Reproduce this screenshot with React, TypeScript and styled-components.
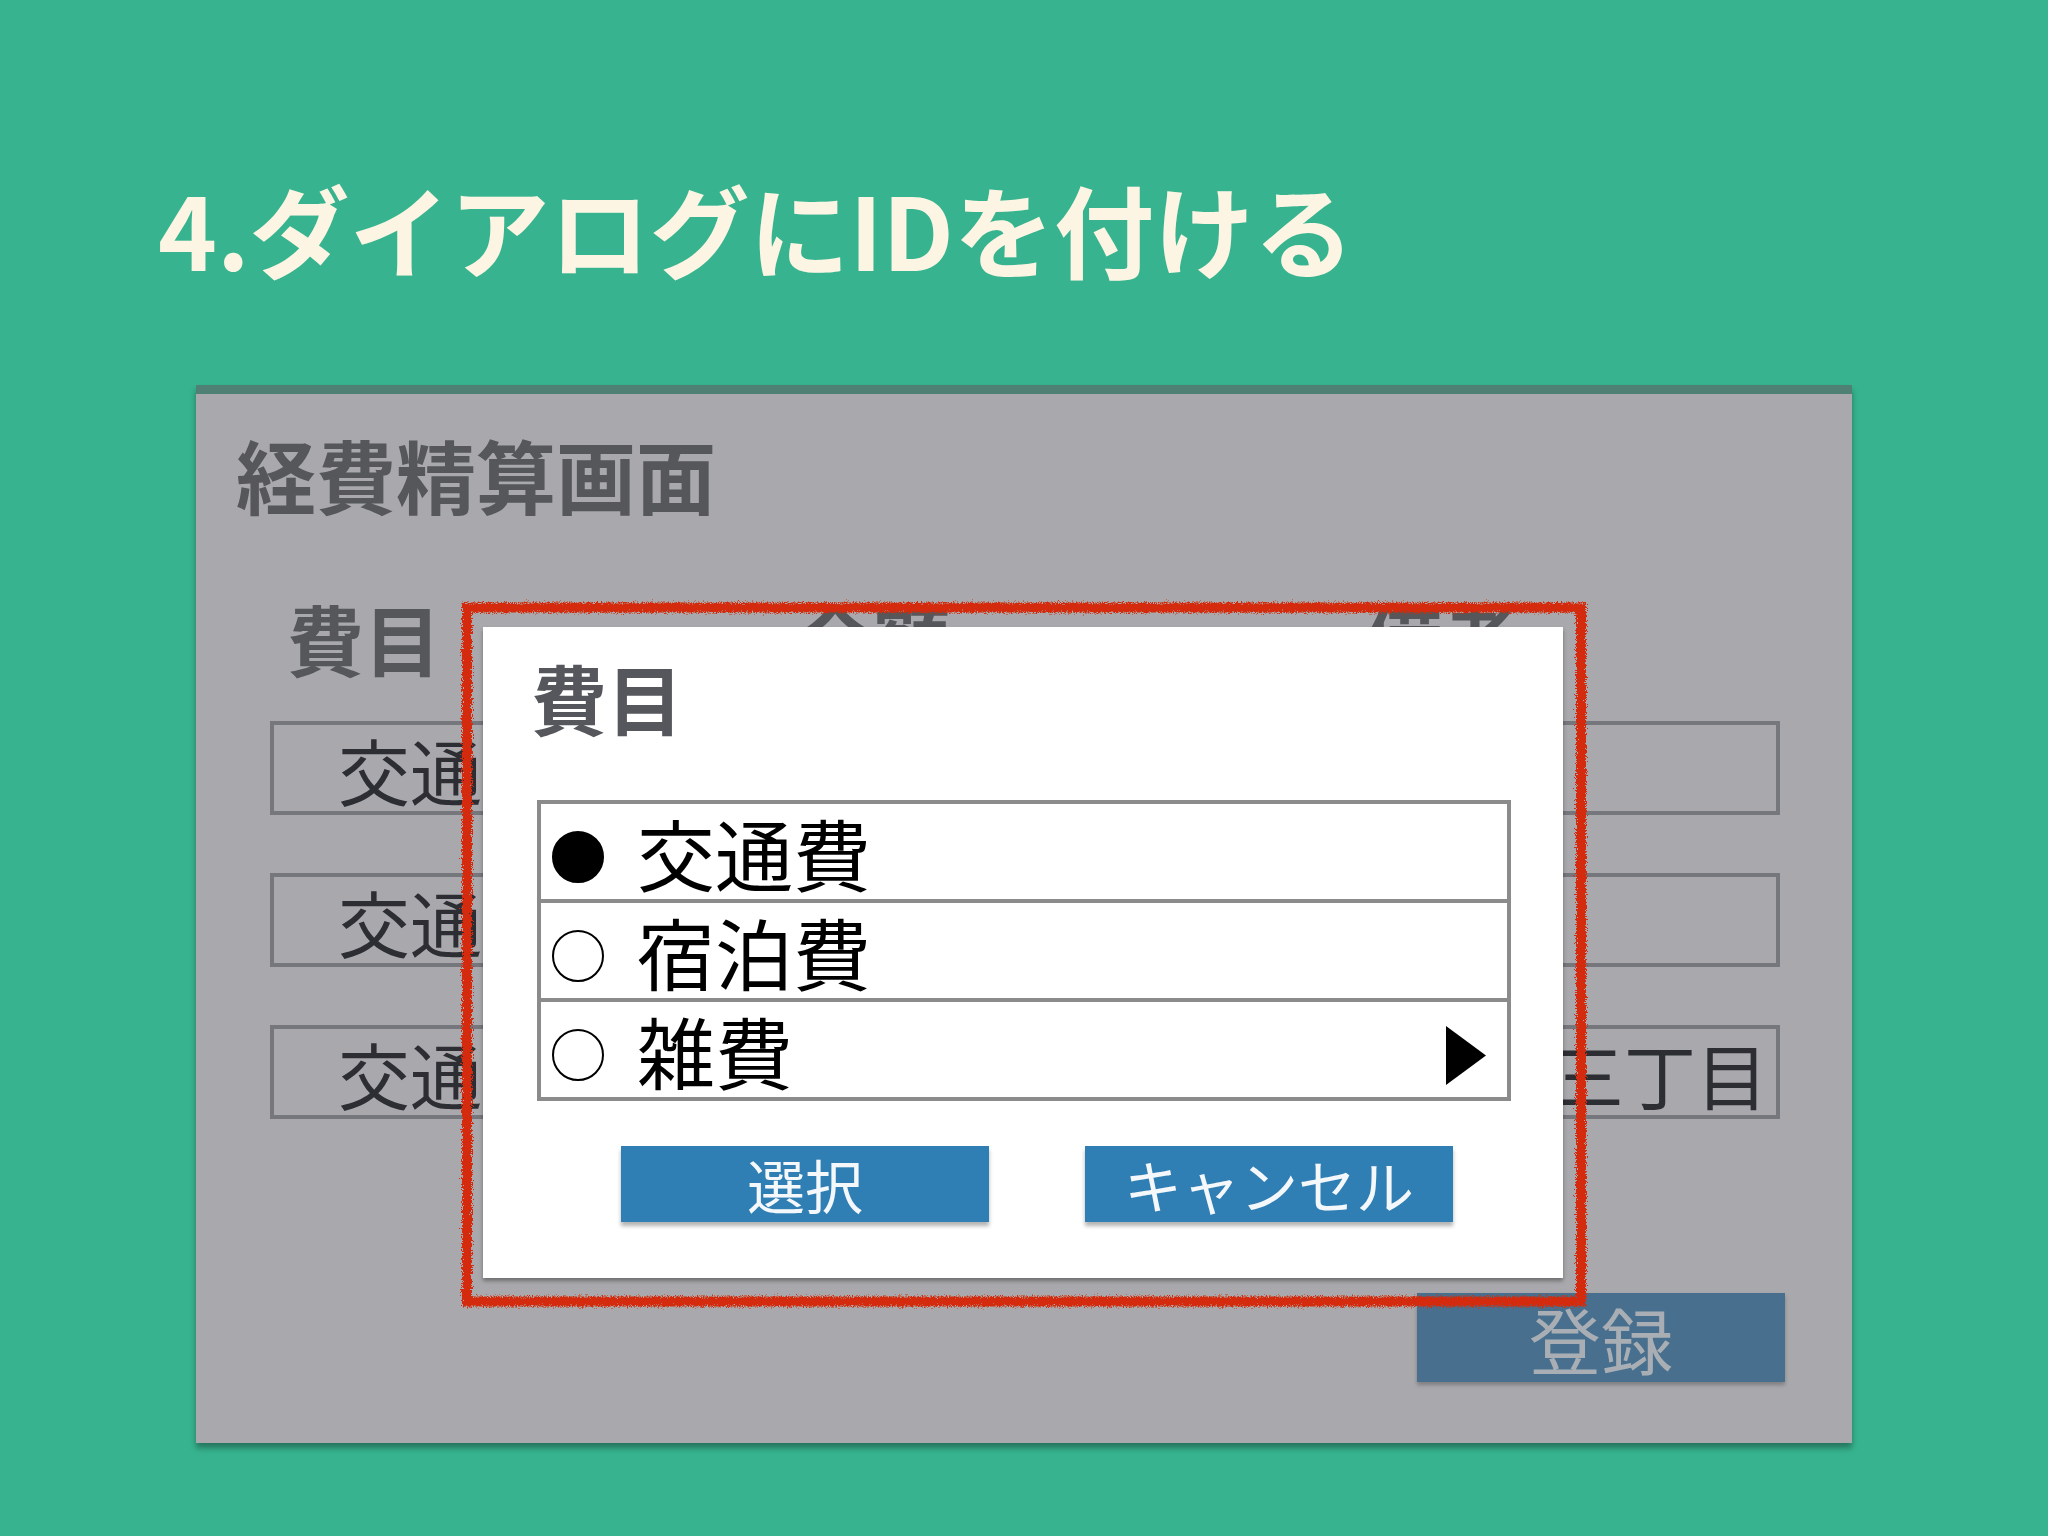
import styled, { createGlobalStyle } from "styled-components";

// ------------------ DATA ------------------
const rows = [
  { item: "交通費", amount: "", note: "" },
  { item: "交通費", amount: "", note: "" },
  { item: "交通費", amount: "", note: "港区芝公園三丁目" },
];

const options = [
  { label: "交通費", checked: true, more: false },
  { label: "宿泊費", checked: false, more: false },
  { label: "雑費", checked: false, more: true },
];

// ------------------ PAGE ------------------
export default function App() {
  return (
    <>
      <GlobalStyle />
      <Page>
        <Heading>4.ダイアログにIDを付ける</Heading>

        <Panel>
          <PanelTitle>経費精算画面</PanelTitle>

          <Table>
            <HeadCell $indent={17}>費目</HeadCell>
            <HeadCell $indent={117}>金額</HeadCell>
            <HeadCell $indent={285}>備考</HeadCell>

            {rows.map((r, i) => (
              <FieldRow key={i}>
                <InputBox>{r.item}</InputBox>
                <InputBox>{r.amount}</InputBox>
                <InputBox $right>{r.note}</InputBox>
              </FieldRow>
            ))}
          </Table>

          <Footer>
            <SubmitButton>登録</SubmitButton>
          </Footer>

          {/* dialog sitting over the form */}
          <Dialog>
            <DialogTitle>費目</DialogTitle>
            <OptionList>
              {options.map((o) => (
                <OptionRow key={o.label}>
                  <Radio $checked={o.checked} />
                  <OptionLabel>{o.label}</OptionLabel>
                  {o.more && (
                    <Arrow viewBox="0 0 40 59">
                      <path d="M0 0 L40 29.5 L0 59 Z" fill="#000" />
                    </Arrow>
                  )}
                </OptionRow>
              ))}
            </OptionList>
            <ButtonRow>
              <DialogButton>選択</DialogButton>
              <DialogButton>キャンセル</DialogButton>
            </ButtonRow>
          </Dialog>

          {/* red marker annotation */}
          <Marker viewBox="0 0 1126 706">
            <defs>
              <filter id="rough" x="-5%" y="-5%" width="110%" height="110%">
                <feTurbulence
                  type="fractalNoise"
                  baseFrequency="0.8"
                  numOctaves="2"
                  seed="3"
                  result="noise"
                />
                <feDisplacementMap
                  in="SourceGraphic"
                  in2="noise"
                  scale="8"
                  xChannelSelector="R"
                  yChannelSelector="G"
                />
              </filter>
            </defs>
            <rect
              x="6"
              y="5.5"
              width="1114"
              height="694"
              fill="none"
              stroke="#d42a0c"
              strokeWidth="10"
              filter="url(#rough)"
            />
          </Marker>
        </Panel>
      </Page>
    </>
  );
}

// ------------------ STYLES ------------------
const GlobalStyle = createGlobalStyle`
  html, body {
    margin: 0;
    padding: 0;
    background: #37b48f;
  }
  body {
    font-family: "Noto Sans CJK JP", "Noto Sans", sans-serif;
  }
`;

const Page = styled.div`
  width: 2048px;
  height: 1536px;
  box-sizing: border-box;
  padding: 178px 0 0 158px;
  overflow: hidden;
`;

const Heading = styled.h1`
  margin: 0;
  font-size: 100px;
  line-height: 100px;
  font-weight: 700;
  color: #fdf5e3;
  white-space: nowrap;
`;

const Panel = styled.div`
  position: relative;
  margin: 107px 0 0 38px;
  width: 1656px;
  height: 1058px;
  box-sizing: border-box;
  background: #a9a9ad;
  border-top: 9px solid #4f8074;
  box-shadow: 0 5px 6px rgba(0, 0, 0, 0.35);
  padding: 39px 67px 0 40px;
  display: flex;
  flex-direction: column;
`;

const PanelTitle = styled.h2`
  margin: 0;
  font-size: 80px;
  line-height: 80px;
  font-weight: 700;
  color: #55575b;
`;

const Table = styled.div`
  margin: 86px 0 0 34px;
  width: 1510px;
  display: grid;
  grid-template-columns: 370px 360px 1fr;
  column-gap: 40px;
  row-gap: 0;
`;

const HeadCell = styled.div<{ $indent: number }>`
  padding-left: ${(p) => p.$indent}px;
  font-size: 77px;
  line-height: 77px;
  font-weight: 700;
  color: #55575b;
  margin-bottom: 45px;
`;

const FieldRow = styled.div`
  display: contents;

  & + & > div {
    margin-top: 58px;
  }
`;

const InputBox = styled.div<{ $right?: boolean }>`
  height: 94px;
  box-sizing: border-box;
  border: 4px solid #76777c;
  display: flex;
  align-items: center;
  justify-content: ${(p) => (p.$right ? "flex-end" : "flex-start")};
  padding: ${(p) => (p.$right ? "0 8px 0 0" : "0 0 0 64px")};
  font-size: 72px;
  color: #2d2e33;
  white-space: nowrap;
  overflow: hidden;
`;

const Footer = styled.div`
  margin-top: 174px;
  display: flex;
  justify-content: flex-end;
`;

const SubmitButton = styled.div`
  width: 368px;
  height: 89px;
  background: #48708e;
  color: #a8aeb4;
  font-size: 72px;
  display: flex;
  align-items: center;
  justify-content: center;
  box-shadow: 0 3px 4px rgba(0, 0, 0, 0.25);
`;

const Dialog = styled.div`
  position: absolute;
  left: 287px;
  top: 233px;
  width: 1080px;
  box-sizing: border-box;
  padding: 32px 52px 56px 54px;
  background: #ffffff;
  box-shadow: 0 3px 4px rgba(0, 0, 0, 0.35);
`;

const DialogTitle = styled.div`
  margin-left: -6px;
  font-size: 76px;
  line-height: 76px;
  font-weight: 700;
  color: #55575c;
`;

const OptionList = styled.div`
  margin-top: 65px;
  border: 4px solid #8b8b8b;
`;

const OptionRow = styled.div`
  height: 95px;
  display: flex;
  align-items: center;
  padding: 0 21px 0 11px;

  & + & {
    border-top: 4px solid #8b8b8b;
  }
`;

const Radio = styled.span<{ $checked: boolean }>`
  width: 52px;
  height: 52px;
  flex: none;
  box-sizing: border-box;
  border-radius: 50%;
  border: 2px solid #000;
  background: ${(p) => (p.$checked ? "#000" : "transparent")};
  margin-top: 10px;
`;

const OptionLabel = styled.span`
  margin-left: 33px;
  font-size: 78px;
  line-height: 1;
  color: #000;
`;

const Arrow = styled.svg`
  margin-left: auto;
  width: 40px;
  height: 59px;
  margin-top: 12px;
`;

const ButtonRow = styled.div`
  margin-top: 45px;
  padding-left: 84px;
  display: flex;
  gap: 96px;
`;

const DialogButton = styled.div`
  width: 368px;
  height: 76px;
  background: #2f7eb4;
  color: #f4f8fb;
  font-size: 58px;
  display: flex;
  align-items: center;
  justify-content: center;
  box-shadow: 0 4px 4px rgba(0, 0, 0, 0.3);
`;

const Marker = styled.svg`
  position: absolute;
  left: 265px;
  top: 208px;
  width: 1126px;
  height: 706px;
  overflow: visible;
  pointer-events: none;
`;
